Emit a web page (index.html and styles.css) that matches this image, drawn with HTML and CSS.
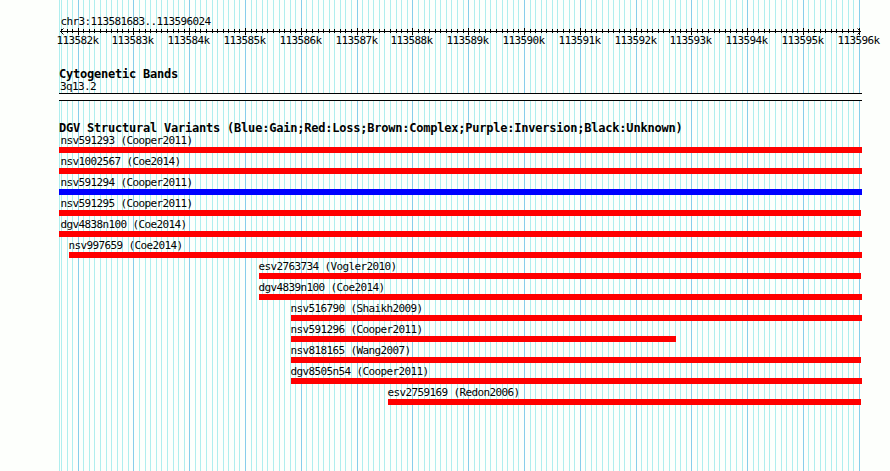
FILE: index.html
```html
<!DOCTYPE html>
<html lang="en">
<head>
    <meta charset="UTF-8">
    <title>chr3:113581683..113596024</title>
    <link rel="stylesheet" href="styles.css">
</head>
<body>
    <div class="browser">
        <svg class="grid" id="grid" width="890" height="471"></svg>

        <div class="region">chr3:113581683..113596024</div>
        <svg class="ruler" id="ruler" width="890" height="22"></svg>

        <div class="track cytobands">
            <h2>Cytogenetic Bands</h2>
            <div class="band-name">3q13.2</div>
            <div class="band"></div>
        </div>

        <div class="track variants">
            <h2>DGV Structural Variants (Blue:Gain;Red:Loss;Brown:Complex;Purple:Inversion;Black:Unknown)</h2>
            <div id="variants"></div>
        </div>
    </div>

    <script src="script.js"></script>
</body>
</html>
```

FILE: styles.css
```css
* {
    margin: 0;
    padding: 0;
    box-sizing: border-box;
}

body {
    background-color: #fdfffc;
    color: #000;
    font-family: 'DejaVu Sans Mono', monospace;
    font-size: 11px;
    line-height: 13px;
    letter-spacing: -0.62px;
}

.browser {
    position: relative;
    width: 890px;
    height: 471px;
    padding-top: 15px;
    overflow: hidden;
    white-space: nowrap;
}

/* vertical guide lines behind every track */
.grid {
    position: absolute;
    top: 0;
    left: 0;
    z-index: -1;
}

.grid .minor {
    fill: #afeeee;
}

.grid .major {
    fill: #87ceeb;
}

.region {
    padding-left: 60.5px;
}

.ruler {
    display: block;
}

.ruler path {
    fill: none;
    stroke: #000;
}

.track {
    padding-left: 59px;
}

.track h2 {
    font-size: 12px;
    line-height: 14px;
    letter-spacing: -0.22px;
}

.cytobands {
    padding-top: 17px;
}

.band-name {
    height: 12px;
    padding-left: 1px;
    line-height: 11px;
}

.band {
    width: 803px;
    height: 8px;
    border-top: 1px solid #000;
    border-bottom: 1px solid #000;
    background-color: #fdfffc;
}

.variants {
    padding-top: 20px;
}

.variants h2 {
    height: 11px;
}

.variant {
    height: 21px;
    padding-top: 2px;
}

.variant .name {
    padding-left: 0.5px;
}

.variant .bar {
    height: 6px;
}

.loss {
    background-color: #f00;
}

.gain {
    background-color: #00f;
}
```

FILE: script.js
```javascript
const START = 113581683;
const END = 113596024;
const LEFT = 60;
const WIDTH = 800;

// left and right edges are in pixels
const variants = [
    { name: 'nsv591293 (Cooper2011)', type: 'loss', left: 59, right: 862 },
    { name: 'nsv1002567 (Coe2014)', type: 'loss', left: 59, right: 862 },
    { name: 'nsv591294 (Cooper2011)', type: 'gain', left: 59, right: 862 },
    { name: 'nsv591295 (Cooper2011)', type: 'loss', left: 59, right: 861 },
    { name: 'dgv4838n100 (Coe2014)', type: 'loss', left: 59, right: 862 },
    { name: 'nsv997659 (Coe2014)', type: 'loss', left: 69, right: 862 },
    { name: 'esv2763734 (Vogler2010)', type: 'loss', left: 259, right: 861 },
    { name: 'dgv4839n100 (Coe2014)', type: 'loss', left: 259, right: 862 },
    { name: 'nsv516790 (Shaikh2009)', type: 'loss', left: 291, right: 862 },
    { name: 'nsv591296 (Cooper2011)', type: 'loss', left: 291, right: 676 },
    { name: 'nsv818165 (Wang2007)', type: 'loss', left: 291, right: 861 },
    { name: 'dgv8505n54 (Cooper2011)', type: 'loss', left: 291, right: 862 },
    { name: 'esv2759169 (Redon2006)', type: 'loss', left: 388, right: 861 }
];

function toPixel(position) {
    return Math.round(LEFT + (position - START) * WIDTH / (END - START));
}

// Grid lines and ruler ticks, one every 100 bases
function drawScale() {
    let lines = '<rect class="minor" x="59" y="0" width="1" height="471"/>';
    // axis with an open arrowhead at each end
    let ticks = 'M60 3.5H861M63.5 0.5L60.5 3.5L63.5 6.5M857.5 0.5L860.5 3.5L857.5 6.5';
    let labels = '';

    for (let pos = Math.ceil(START / 100) * 100; pos <= END; pos += 100) {
        const x = toPixel(pos);
        const major = pos % 1000 === 0;
        lines += `<rect class="${major ? 'major' : 'minor'}" x="${x}" y="0" width="1" height="471"/>`;
        ticks += major ? `M${x + 0.5} 0V7` : `M${x + 0.5} 1V5`;
        if (major) {
            labels += `<text x="${x - 21.5}" y="16">${pos / 1000}k</text>`;
        }
    }

    document.getElementById('grid').innerHTML = lines;
    document.getElementById('ruler').innerHTML = `<path d="${ticks}"/>${labels}`;
}

function drawVariants() {
    document.getElementById('variants').innerHTML = variants.map(v => `
        <div class="variant">
            <div class="name" style="margin-left: ${Math.max(60, v.left - 1) - 59}px">${v.name}</div>
            <div class="bar ${v.type}" style="margin-left: ${v.left - 59}px; width: ${v.right - v.left}px"></div>
        </div>
    `).join('');
}

drawScale();
drawVariants();
```
